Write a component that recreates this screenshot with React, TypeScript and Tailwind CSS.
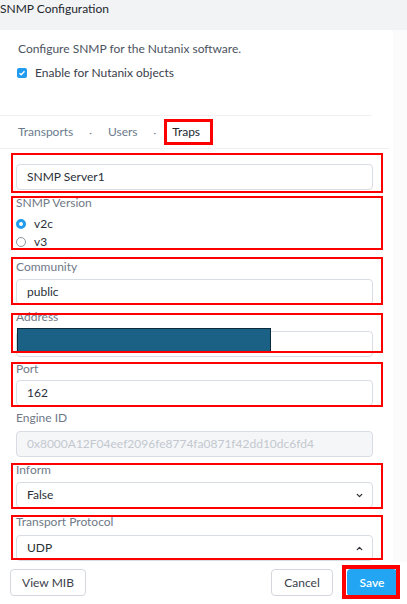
import { ChevronDown, ChevronUp } from "lucide-react";

const FONT = "font-['Lato','Liberation_Sans',sans-serif]";

// red annotation rectangles drawn over the screenshot
const MARKS = [
  { x: 164, y: 119, w: 49, h: 26, b: 3 },
  { x: 11, y: 153, w: 372, h: 40, b: 2 },
  { x: 11, y: 196, w: 372, h: 54, b: 2 },
  { x: 11, y: 257, w: 372, h: 48, b: 2 },
  { x: 11, y: 313, w: 372, h: 40, b: 2 },
  { x: 11, y: 362, w: 372, h: 45, b: 2 },
  { x: 11, y: 463, w: 372, h: 46, b: 2 },
  { x: 11, y: 515, w: 372, h: 45, b: 2 },
  { x: 342, y: 565, w: 58, h: 34, b: 4 },
];

function Label({ children }: { children: string }) {
  return <div className="h-4 text-[12px] leading-4 text-[#6f7987]">{children}</div>;
}

function TextBox({
  value,
  disabled,
  top,
  children,
}: {
  value?: string;
  disabled?: boolean;
  top: string;
  children?: React.ReactNode;
}) {
  return (
    <div
      className={`${top} flex h-[26px] items-center rounded-[4px] border border-[#d8dce3] pl-[10px] pr-[8px] text-[12px] ${
        disabled ? "bg-[#f5f6f8] text-[#c3c8cf]" : "bg-white text-[#2b3038]"
      }`}
    >
      <span className="flex-1">{value}</span>
      {children}
    </div>
  );
}

export default function App() {
  return (
    <div className={`relative h-[604px] w-[407px] overflow-hidden bg-[#fbfbfc] ${FONT}`}>
      <div className="h-[30px] bg-[#f2f3f5] pt-[1px] text-[12px] leading-4 text-[#22272e]">SNMP Configuration</div>

      <div className="h-[532px] w-[393px] bg-white">
        <div className="pl-[18px] pt-[11px] text-[12px] leading-4 text-[#4b5361]">Configure SNMP for the Nutanix software.</div>
        <div className="mt-[8px] flex h-4 items-center gap-[8px] pl-[17px] text-[12px] leading-4 text-[#3a404a]">
          <span className="flex h-[10px] w-[10px] items-center justify-center rounded-[2px] bg-[#1f9cf0]">
            <svg width="8" height="8" viewBox="0 0 8 8">
              <path d="M1.5 4.2 L3.2 5.8 L6.5 2.2" stroke="white" strokeWidth="1.4" fill="none" />
            </svg>
          </span>
          Enable for Nutanix objects
        </div>
        <div className="mt-[34px] h-px w-[372px] bg-[#eef0f2]" />
        <div className="flex h-[32px] items-center pl-[18px] text-[12px] text-[#6b7a8c]">
          <span>Transports</span>
          <span className="mx-[16px] text-[10px]">·</span>
          <span>Users</span>
          <span className="mx-[16px] text-[10px]">·</span>
          <span className="text-[#22272e]">Traps</span>
        </div>
        <div className="h-px w-[389px] bg-[#eef0f2]" />

        <div className="w-[373px] pl-[16px]">
          <TextBox top="mt-[15px]" value="SNMP Server1" />

          <div className="mt-[5px]">
            <Label>SNMP Version</Label>
            <div className="mt-[5px] flex h-4 items-center gap-[8px] text-[12px] text-[#2b3038]">
              <span className="h-[10px] w-[10px] rounded-full border-[3px] border-[#1f9cf0] bg-white" />
              v2c
            </div>
            <div className="mt-[2px] flex h-4 items-center gap-[8px] text-[12px] text-[#2b3038]">
              <span className="h-[10px] w-[10px] rounded-full border border-[#8d949e] bg-white" />
              v3
            </div>
          </div>

          <div className="mt-[9px]">
            <Label>Community</Label>
            <TextBox top="mt-[4px]" value="public" />
          </div>

          <div className="mt-[4px]">
            <Label>Address</Label>
            <TextBox top="mt-[6px]" />
          </div>

          <div className="mt-[4px]">
            <Label>Port</Label>
            <TextBox top="mt-[3px]" value="162" />
          </div>

          <div className="mt-[4px]">
            <Label>Engine ID</Label>
            <TextBox top="mt-[5px]" value="0x8000A12F04eef2096fe8774fa0871f42dd10dc6fd4" disabled />
          </div>

          <div className="mt-[5px]">
            <Label>Inform</Label>
            <TextBox top="mt-[4px]" value="False">
              <ChevronDown size={9} strokeWidth={3.5} className="text-[#2b3038]" />
            </TextBox>
          </div>

          <div className="mt-[6px]">
            <Label>Transport Protocol</Label>
            <TextBox top="mt-[5px]" value="UDP">
              <ChevronUp size={9} strokeWidth={3.5} className="text-[#2b3038]" />
            </TextBox>
          </div>
        </div>
      </div>

      <div className="flex h-[42px] items-start bg-white px-[10px] pt-[7px] text-[12px]">
        <button className="h-[27px] w-[76px] rounded-[4px] border border-[#d3d7dd] bg-white text-[#3a404a]">View MIB</button>
        <div className="flex-1" />
        <button className="h-[27px] w-[62px] rounded-[4px] border border-[#d3d7dd] bg-white text-[#3a404a]">Cancel</button>
        <button className="ml-[14px] h-[27px] w-[50px] rounded-[4px] bg-[#22a6f4] font-semibold text-white">Save</button>
      </div>

      {/* redacted address value */}
      <div className="absolute left-[17px] top-[328px] h-[24px] w-[254px] border border-[#0b2a3b] bg-[#1b6185]" />

      {MARKS.map((m, i) => (
        <div
          key={i}
          className="pointer-events-none absolute border-[#ff0000]"
          style={{ left: m.x, top: m.y, width: m.w, height: m.h, borderWidth: m.b }}
        />
      ))}
    </div>
  );
}
